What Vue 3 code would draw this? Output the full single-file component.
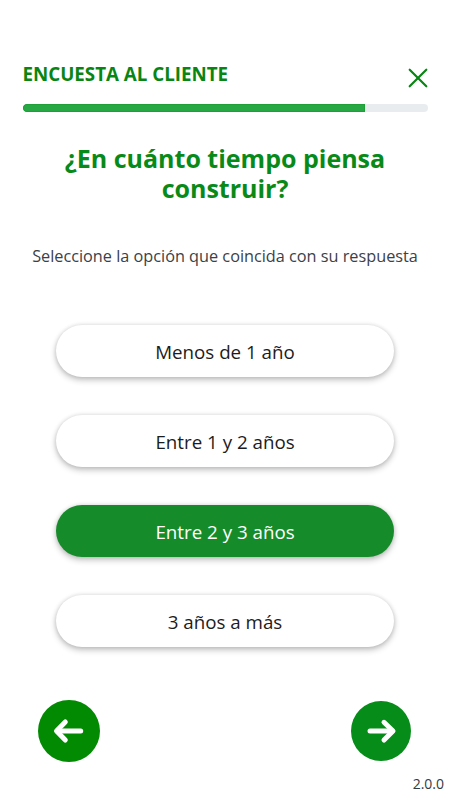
<script setup>
import { ref } from 'vue'

const options = ['Menos de 1 año', 'Entre 1 y 2 años', 'Entre 2 y 3 años', '3 años a más']
const selected = ref(2)
const progress = 84.5
</script>

<template>
  <main class="page">
    <header class="header">
      <h2 class="heading">ENCUESTA AL CLIENTE</h2>
      <button class="close" aria-label="Cerrar">
        <svg width="20" height="20" viewBox="0 0 20 20"><path d="M1.7 1.7 18.3 18.3M18.3 1.7 1.7 18.3" /></svg>
      </button>
    </header>
    <div class="track"><div class="bar" :style="{ width: progress + '%' }"></div></div>
    <h1 class="question">¿En cuánto tiempo piensa construir?</h1>
    <p class="hint">Seleccione la opción que coincida con su respuesta</p>
    <div class="options">
      <button
        v-for="(option, i) in options"
        :key="option"
        class="option"
        :class="{ active: i === selected }"
        @click="selected = i"
      >{{ option }}</button>
    </div>
    <nav class="nav">
      <button class="round" aria-label="Anterior">
        <svg width="32" height="32" viewBox="0 0 32 32"><path d="M27.7 16H6" /><path d="M12.3 7 3.5 16l8.8 9" /></svg>
      </button>
      <button class="round next" aria-label="Siguiente">
        <svg width="32" height="32" viewBox="0 0 32 32"><path d="M5 16H27" /><path d="M19 7.3 28 16l-9 9" /></svg>
      </button>
    </nav>
    <footer class="version">2.0.0</footer>
  </main>
</template>

<style>
body { background: #fff; }
</style>

<style scoped>
.page {
  box-sizing: border-box;
  width: 450px;
  height: 800px;
  padding: 62px 22.5px 0;
  display: flex;
  flex-direction: column;
  overflow: hidden;
  background: #fff;
  font-family: "Open Sans", sans-serif;
}
button {
  border: 0;
  padding: 0;
  font-family: inherit;
}
.header {
  display: flex;
  justify-content: space-between;
  height: 42px;
}
.heading {
  margin: 0;
  font-size: 18.75px;
  line-height: 24px;
  font-weight: 700;
  color: #088512;
}
.close {
  width: 20px;
  height: 20px;
  margin-top: 6px;
  background: none;
}
svg { display: block; fill: none; }
.close svg { stroke: #088512; stroke-width: 2.2; stroke-linecap: round; }
.track {
  flex: none;
  height: 8px;
  border-radius: 4px;
  background: #e9ecef;
  overflow: hidden;
}
.bar { height: 100%; background: #28a745; box-shadow: inset 0 0 0 1px #1fa037; border-radius: 4px 0 0 4px; }
.question {
  margin: 31px 30px 0;
  font-size: 25px;
  line-height: 30px;
  font-weight: 700;
  text-align: center;
  color: #088a18;
}
.hint {
  margin: 41px -10px 0;
  font-size: 16.25px;
  line-height: 25px;
  text-align: center;
  color: #3c4146;
}
.options {
  display: flex;
  flex-direction: column;
  gap: 38px;
  margin: 56px 33.75px 0;
}
.option {
  height: 52px;
  border-radius: 26px;
  background: #fff;
  color: #1c1c1c;
  font-size: 18.75px;
  box-shadow: 0 3px 6px rgba(0, 0, 0, 0.24), 0 0 4px rgba(0, 0, 0, 0.12);
}
.option.active { background: #168b2a; color: #fff; }
.nav {
  display: flex;
  align-items: center;
  justify-content: space-between;
  margin: 53px 16.5px 0 15.5px;
}
.round {
  display: grid;
  place-items: center;
  width: 62px;
  height: 62px;
  border-radius: 50%;
  background: #028a02;
}
.round.next { width: 60px; height: 60px; background: #068c18; }
.round svg { stroke: #fff; stroke-width: 5; stroke-linecap: round; stroke-linejoin: round; }
.version {
  margin: 12px -16.5px 0;
  text-align: right;
  font-size: 14px;
  line-height: 20px;
  color: #343a40;
}
</style>
